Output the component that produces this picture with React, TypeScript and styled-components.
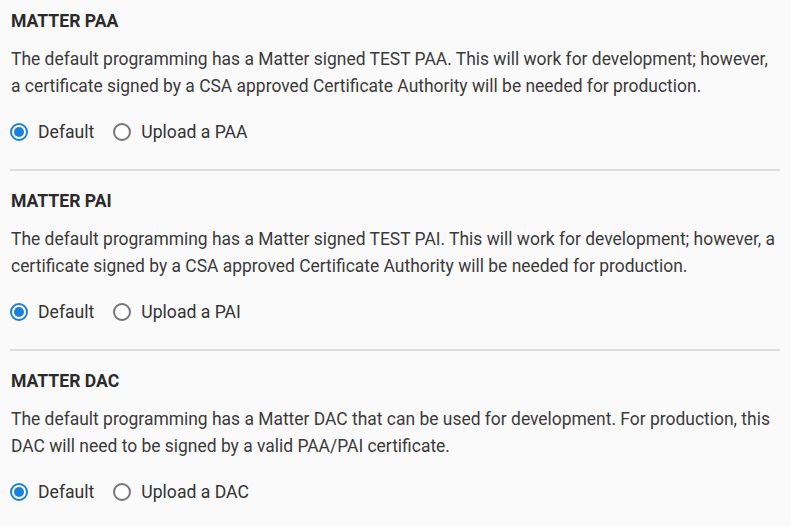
import styled, { createGlobalStyle } from "styled-components";

const GlobalStyle = createGlobalStyle`
  html, body {
    margin: 0;
    padding: 0;
    background: #fafafa;
  }
  body {
    font-family: Roboto, "Liberation Sans", sans-serif;
    color: #333;
  }
`;

type Option = { id: string; label: string };

type SectionData = {
  id: string;
  title: string;
  text: string;
  options: Option[];
  selected: string;
};

const SECTIONS: SectionData[] = [
  {
    id: "paa",
    title: "MATTER PAA",
    text: "The default programming has a Matter signed TEST PAA. This will work for development; however, a certificate signed by a CSA approved Certificate Authority will be needed for production.",
    options: [
      { id: "default", label: "Default" },
      { id: "upload", label: "Upload a PAA" },
    ],
    selected: "default",
  },
  {
    id: "pai",
    title: "MATTER PAI",
    text: "The default programming has a Matter signed TEST PAI. This will work for development; however, a certificate signed by a CSA approved Certificate Authority will be needed for production.",
    options: [
      { id: "default", label: "Default" },
      { id: "upload", label: "Upload a PAI" },
    ],
    selected: "default",
  },
  {
    id: "dac",
    title: "MATTER DAC",
    text: "The default programming has a Matter DAC that can be used for development. For production, this DAC will need to be signed by a valid PAA/PAI certificate.",
    options: [
      { id: "default", label: "Default" },
      { id: "upload", label: "Upload a DAC" },
    ],
    selected: "default",
  },
];

export default function App() {
  return (
    <>
      <GlobalStyle />
      <Page>
        {SECTIONS.map((section) => (
          <Section key={section.id}>
            <Title>{section.title}</Title>
            <Description>{section.text}</Description>
            <RadioGroup>
              {section.options.map((option) => (
                <RadioLabel key={option.id}>
                  <RadioCircle $checked={option.id === section.selected} />
                  {option.label}
                </RadioLabel>
              ))}
            </RadioGroup>
          </Section>
        ))}
      </Page>
    </>
  );
}

const Page = styled.div`
  padding: 0 11px 0 10px;
`;

const Section = styled.section`
  padding: 20px 0 26.5px;
  border-bottom: 2px solid #dddddd;

  &:first-child {
    padding-top: 11px;
  }

  &:last-child {
    border-bottom: none;
  }
`;

const Title = styled.h3`
  margin: 0 0 14px;
  padding-left: 1px;
  font-size: 17.6px;
  line-height: 21px;
  font-weight: 700;
  color: #2b2b2b;
`;

const Description = styled.p`
  margin: 0 0 20.5px;
  padding-left: 1px;
  font-size: 17.45px;
  line-height: 27px;
  color: #3a3a3a;
`;

const RadioGroup = styled.div`
  display: flex;
  align-items: center;
  gap: 19px;
  height: 22px;
`;

const RadioLabel = styled.label`
  display: inline-flex;
  align-items: center;
  gap: 10px;
  font-size: 17.6px;
  line-height: 22px;
  color: #333;
  cursor: pointer;
`;

const RadioCircle = styled.span<{ $checked: boolean }>`
  position: relative;
  flex: none;
  box-sizing: border-box;
  width: 18px;
  height: 18px;
  border-radius: 50%;
  border: 2px solid ${(p) => (p.$checked ? "#1a80d9" : "#757575")};
  background: #fff;

  &::after {
    content: "";
    display: ${(p) => (p.$checked ? "block" : "none")};
    position: absolute;
    top: 2px;
    left: 2px;
    width: 10px;
    height: 10px;
    border-radius: 50%;
    background: #1a80d9;
  }
`;
